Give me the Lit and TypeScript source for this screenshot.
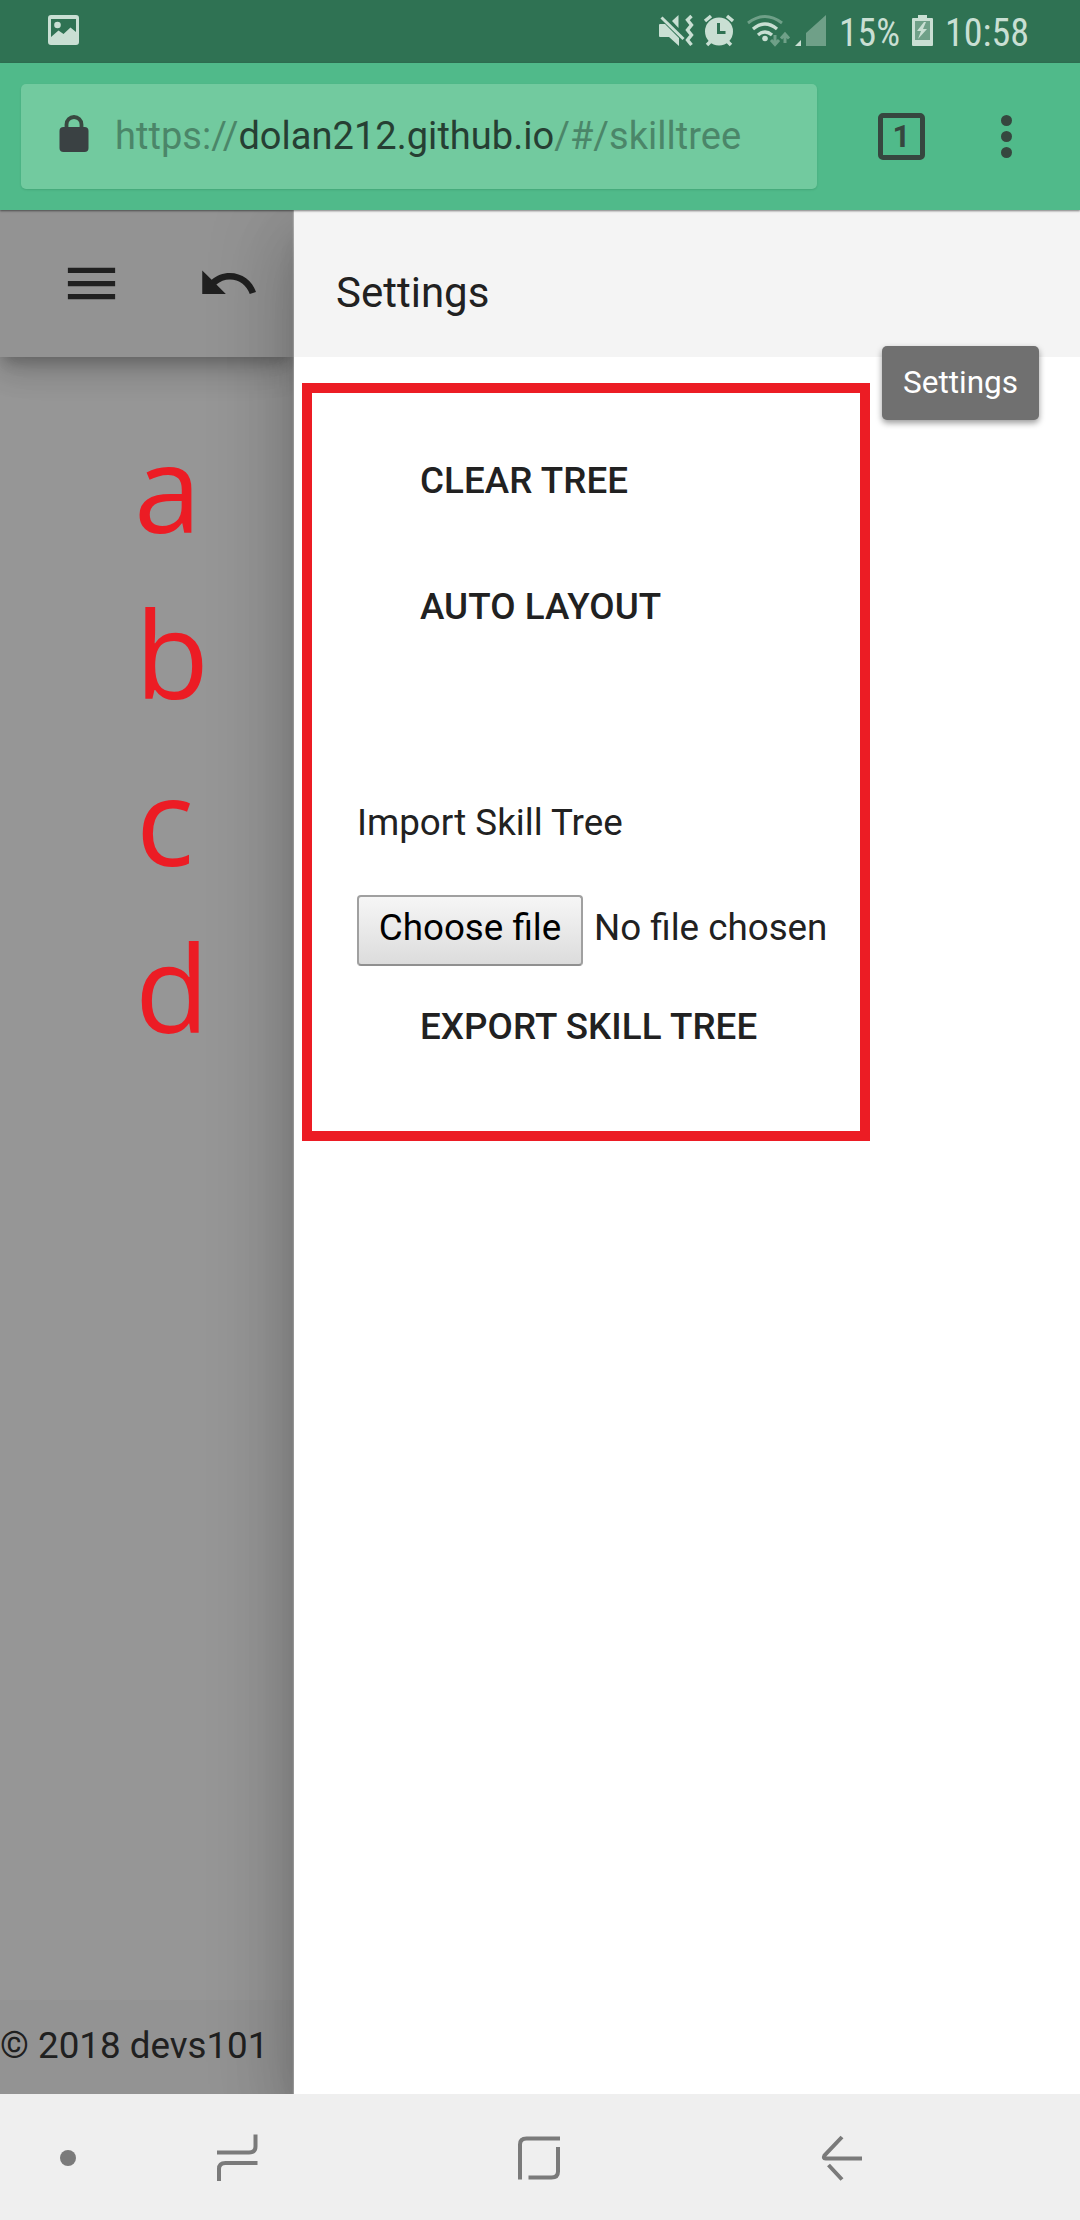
import { LitElement, html, css } from "lit";
import { customElement } from "lit/decorators.js";

@customElement("status-bar")
class StatusBar extends LitElement {
  static styles = css`
    :host { display: flex; justify-content: space-between; height: 63px; background: #2f7253; }
    .icon { display: block; }
    text { font-family: "Roboto Condensed", Roboto, sans-serif; font-size: 39px; fill: #c9dfd3; }
  `;
  render() {
    return html`
      <svg class="icon" width="100" height="63" viewBox="0 0 100 63">
        <path fill="#c9dfd3" fill-rule="evenodd" d="M51 15h25q3 0 3 3v24q0 3-3 3h-25q-3 0-3-3v-24q0-3 3-3zM51 19v18l7.500-6.500 5 3.500 7-6.500 5.500 4.500v-13z"/>
        <circle cx="57.500" cy="25" r="3.300" fill="#c9dfd3"/>
      </svg>
      <svg class="icon" width="440" height="63" viewBox="640 0 440 63">
        <g fill="#c9dfd3">
          <path d="M660 24h5l14 14v8l-10-9h-9q-1 0-1-1v-11q0-1 1-1z"/>
          <path d="M672 21l6.500-6v13z"/>
          <path d="M661.500 17.500l22 21.500" stroke="#c9dfd3" stroke-width="3" fill="none"/>
          <path d="M691.500 16l-4 4 4 5-4 5 4 5-4 5 4 5" stroke="#c9dfd3" stroke-width="3.400" fill="none"/>
          <circle cx="719" cy="31.500" r="14"/>
          <path d="M705 21l6-5M733 21l-6-5M711 41l-4 4M727 41l4 4" stroke="#c9dfd3" stroke-width="3.500" fill="none"/>
          <path d="M718.500 23v9.500h7" stroke="#2f7253" stroke-width="3" fill="none"/>
        </g>
        <g fill="none" stroke-width="3">
          <path d="M748 23q17-13 34 0" stroke="#6fa088"/>
          <path d="M753 29q12-10 24 0M758 35q7-6 14 0" stroke="#c9dfd3" stroke-width="3.300"/>
          <path d="M775 35v9m-4-4l4 4.500 4-4.500M785 43v-9.500m-4 5l4-4.500 4 4.500" stroke="#6fa088"/>
        </g>
        <circle cx="765" cy="38.500" r="2.800" fill="#c9dfd3"/>
        <path d="M795 46l6-6v6z" fill="#c9dfd3"/>
        <path d="M806 46v-13l20-18v31z" fill="#6fa088"/>
        <text x="839" y="46" textLength="61" lengthAdjust="spacingAndGlyphs">15%</text>
        <path d="M913 18h5v-3h9v3h5q1 0 1 1v26q0 1-1 1h-19q-1 0-1-1v-26q0-1 1-1z" fill="#c9dfd3"/>
        <path d="M915 21h15v19h-15z" fill="#6fa088"/>
        <path d="M924 22l-7 9h4l-3 8 9-10h-4l3-7z" fill="#c9dfd3"/>
        <text x="945" y="46" textLength="84" lengthAdjust="spacingAndGlyphs">10:58</text>
      </svg>
    `;
  }
}

@customElement("address-bar")
class AddressBar extends LitElement {
  static styles = css`
    :host { display: flex; align-items: center; height: 147px; background: #50ba8a; box-sizing: border-box; padding-left: 21px; position: relative; z-index: 3; box-shadow: 0 1px 2px rgba(0,0,0,.5); font-family: Roboto, sans-serif; }
    .field { display: flex; align-items: center; width: 796px; height: 105px; border-radius: 5px; background: #72ca9f; box-shadow: 0 1px 2px rgba(0,60,30,.15); box-sizing: border-box; padding-left: 38px; }
    .lock { margin-top: -6px; }
    .url { margin: -2px 0 0 26px; font-size: 38px; line-height: 50px; letter-spacing: .03px; white-space: nowrap; color: #4b8669; }
    .host { color: #263f33; }
    .tabs { display: flex; align-items: center; justify-content: center; box-sizing: border-box; width: 47px; height: 47px; margin-left: 61px; border: 5px solid #36473f; border-radius: 5px; color: #36473f; font-size: 31px; font-weight: 700; line-height: 37px; }
    .more { display: flex; flex-direction: column; gap: 5px; margin-left: 76px; }
    .dot { width: 11px; height: 11px; border-radius: 50%; background: #36473f; }
  `;
  render() {
    return html`
      <div class="field">
        <svg class="lock" width="30" height="38" viewBox="0 0 30 38">
          <path d="M7.500 15v-5.500a7.500 7.500 0 0 1 15 0v5.500" fill="none" stroke="#394840" stroke-width="3.800"/>
          <rect x=".5" y="12" width="29" height="25" rx="4" fill="#3a4143"/>
        </svg>
        <div class="url">https://<span class="host">dolan212.github.io</span>/#/skilltree</div>
      </div>
      <div class="tabs">1</div>
      <div class="more"><div class="dot"></div><div class="dot"></div><div class="dot"></div></div>
    `;
  }
}

@customElement("page-canvas")
class PageCanvas extends LitElement {
  static styles = css`
    :host { display: flex; flex-direction: column; width: 294px; background: #969696; color: #202020; font-family: Roboto, sans-serif; }
    .toolbar { display: flex; align-items: center; gap: 74px; box-sizing: border-box; height: 147px; padding: 0 0 0 60px; background: #939393; box-shadow: 0 8px 13px -3px rgba(0,0,0,.2), 0 16px 26px 0 rgba(0,0,0,.14), 0 3px 47px 0 rgba(0,0,0,.08); }
    .toolbar svg { flex: none; fill: #202020; }
    .canvas { flex: 1; }
    .footer { height: 94px; background: #939393; font-size: 36.75px; line-height: 91px; white-space: nowrap; }
  `;
  render() {
    return html`
      <div class="toolbar">
        <svg width="63" height="63" viewBox="0 0 24 24"><path d="M3 18h18v-2H3v2zm0-5h18v-2H3v2zm0-7v2h18V6H3z"/></svg>
        <svg width="63" height="63" viewBox="0 0 24 24"><path d="M12.500 8c-2.650 0-5.050.99-6.900 2.600L2 7v9h9l-3.620-3.620c1.390-1.160 3.160-1.880 5.120-1.880 3.540 0 6.550 2.310 7.600 5.500l2.370-.78C21.080 11.030 17.150 8 12.500 8z"/></svg>
      </div>
      <div class="canvas"></div>
      <div class="footer">© 2018 devs101</div>
    `;
  }
}

@customElement("settings-drawer")
class SettingsDrawer extends LitElement {
  static styles = css`
    :host { display: flex; flex-direction: column; flex: 1; position: relative; background: #fff; color: #212121; font-family: Roboto, sans-serif; font-size: 36.75px; box-shadow: 0 21px 26px -13px rgba(0,0,0,.2), 0 42px 63px 5px rgba(0,0,0,.14), 0 16px 79px 13px rgba(0,0,0,.12), -1px 0 1px rgba(255,255,255,.3); }
    .header { display: flex; align-items: center; box-sizing: border-box; height: 147px; padding: 18px 0 0 42px; background: #f4f4f4; font-size: 42px; line-height: 50px; }
    .body { display: flex; flex-direction: column; align-items: flex-start; padding: 77px 0 0 63px; }
    button { border: 0; padding: 0; margin: 0; font: inherit; color: inherit; background: none; white-space: nowrap; }
    .action { height: 94px; line-height: 94px; padding-left: 63px; font-weight: 500; letter-spacing: .06px; }
    .auto { margin-top: 32px; }
    .label { margin-top: 147px; line-height: 44px; }
    .file { display: flex; align-items: center; gap: 10px; height: 71px; margin-top: 50px; }
    .choose { box-sizing: border-box; width: 226px; height: 71px; padding-bottom: 6px; border: 2px solid #a0a0a0; border-bottom-color: #909090; border-radius: 4px; color: #000; background: linear-gradient(#f6f6f6, #dcdcdc); }
    .none { padding: 0 0 6px 1px; white-space: nowrap; }
    .export { margin-top: 14px; }
  `;
  render() {
    return html`
      <div class="header">Settings</div>
      <div class="body">
        <button class="action">CLEAR TREE</button>
        <button class="action auto">AUTO LAYOUT</button>
        <div class="label">Import Skill Tree</div>
        <div class="file"><button class="choose">Choose file</button><span class="none">No file chosen</span></div>
        <button class="action export">EXPORT SKILL TREE</button>
      </div>
    `;
  }
}

@customElement("nav-bar")
class NavBar extends LitElement {
  static styles = css`
    :host { display: block; height: 126px; background: #efefef; position: relative; z-index: 3; }
    svg { display: block; }
  `;
  render() {
    return html`
      <svg width="1080" height="126" viewBox="0 2094 1080 126" fill="none" stroke="#7a7a7a" stroke-width="4">
        <circle cx="68" cy="2158" r="8" fill="#7a7a7a" stroke="none"/>
        <path d="M217 2152.500h32q6.500 0 6.500-6v-12M219 2181v-12q0-6 6.500-6h32"/>
        <path d="M520 2179.500v-35q0-6 6.500-6h33.500M558 2147v24.500q0 6-6.500 6h-23"/>
        <path d="M842 2137l-17.500 18.500q-1.500 3 1 3h36.500M828.500 2165l13.500 14.500"/>
      </svg>
    `;
  }
}

@customElement("app-root")
class AppRoot extends LitElement {
  static styles = css`
    :host { display: flex; flex-direction: column; position: relative; width: 1080px; height: 2220px; overflow: hidden; }
    .content { display: flex; flex: 1; overflow: hidden; }
    .frame { position: absolute; left: 302px; top: 383px; width: 568px; height: 758px; box-sizing: border-box; border: 10px solid #ec1c24; }
    .tip { position: absolute; left: 882px; top: 346px; width: 157px; height: 74px; border-radius: 5px; background: #707070; color: #fff; font: 31.5px/74px Roboto, sans-serif; text-align: center; box-shadow: 0 3px 6px rgba(0,0,0,.4); }
    .mark { position: absolute; color: #ec1c24; font: 121px/120px "Open Sans", "Noto Sans", sans-serif; }
    .a { left: 134px; top: 426px; }
    .b { left: 135px; top: 592px; }
    .c { left: 136px; top: 759px; }
    .d { left: 135px; top: 926px; }
  `;
  render() {
    return html`
      <status-bar></status-bar>
      <address-bar></address-bar>
      <div class="content">
        <page-canvas></page-canvas>
        <settings-drawer></settings-drawer>
      </div>
      <nav-bar></nav-bar>
      <div class="frame"></div>
      <div class="tip">Settings</div>
      <div class="mark a">a</div>
      <div class="mark b">b</div>
      <div class="mark c">c</div>
      <div class="mark d">d</div>
    `;
  }
}
